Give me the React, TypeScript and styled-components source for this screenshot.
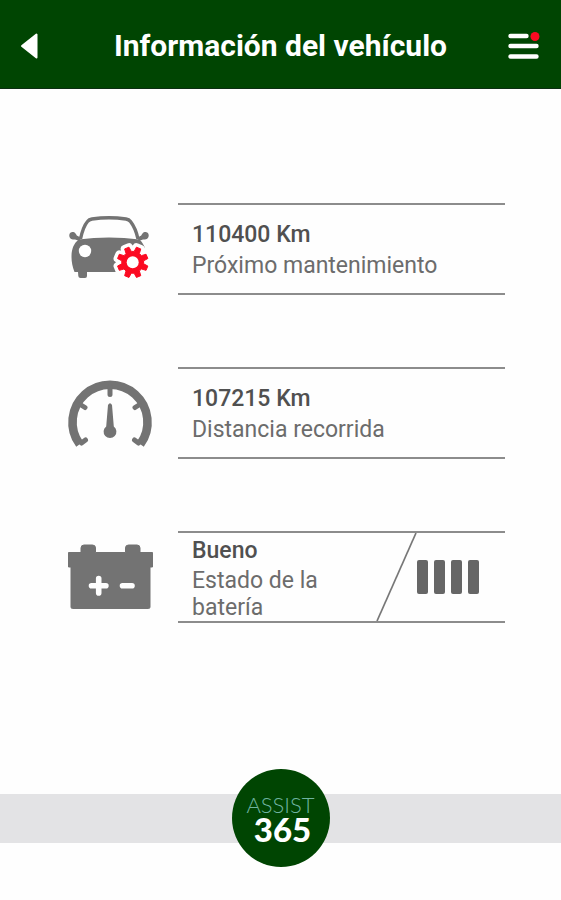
import React from "react";
import styled, { createGlobalStyle } from "styled-components";

const green = "#004502";
const gray = "#737373";
const red = "#fb0a22";

const GlobalStyle = createGlobalStyle`
  *, *::before, *::after { box-sizing: border-box; }
  body {
    margin: 0;
    background: #fefefe;
    font-family: Roboto, "Liberation Sans", sans-serif;
  }
`;

const Screen = styled.div`
  display: flex;
  flex-direction: column;
  min-height: 100vh;
`;

const Header = styled.header`
  display: flex;
  align-items: center;
  justify-content: space-between;
  height: 89px;
  padding: 3px 16px 0;
  background: ${green};
  border-bottom: 1px solid #0b2e12;
`;

const IconButton = styled.button`
  display: flex;
  align-items: center;
  justify-content: flex-end;
  width: 40px;
  height: 44px;
  padding: 0 3px 0 0;
  border: 0;
  background: none;
  cursor: pointer;
`;

const BackButton = styled(IconButton)`
  justify-content: flex-start;
`;

const Title = styled.h1`
  margin: 0;
  color: #fff;
  font-size: 30px;
  line-height: 36px;
  font-weight: 700;
  text-align: center;
`;

const Rows = styled.main`
  display: flex;
  flex: 1;
  flex-direction: column;
  gap: 72px;
  padding: 114px 56px 72px 66px;
`;

const Row = styled.section`
  display: flex;
  gap: 24px;
`;

const RowIcon = styled.svg`
  flex: none;
  width: 88px;
  height: 92px;
`;

const Panel = styled.div`
  display: flex;
  flex: 1;
  min-width: 0;
  min-height: 92px;
  border-top: 2px solid #8c8c8c;
  border-bottom: 2px solid #8c8c8c;
`;

const Copy = styled.div`
  display: flex;
  flex: 1;
  flex-direction: column;
  justify-content: center;
  gap: 2px;
  padding: 4px 0 0 14px;
`;

const Value = styled.p`
  margin: 0;
  color: #505050;
  font-size: 23px;
  line-height: 28px;
  font-weight: 500;
`;

const Label = styled.p<{ $narrow?: boolean }>`
  margin: 0;
  max-width: ${(p) => (p.$narrow ? "140px" : "none")};
  color: #6c6c6c;
  font-size: 23px;
  line-height: ${(p) => (p.$narrow ? "27px" : "30px")};
`;

const Slash = styled.svg`
  flex: none;
  width: 41px;
  height: 88px;
`;

const Level = styled.div`
  display: flex;
  align-items: center;
  gap: 6px;
  padding-right: 26px;
`;

const LevelBar = styled.span`
  width: 11px;
  height: 34px;
  border-radius: 2px;
  background: #666;
`;

const Footer = styled.footer`
  display: flex;
  align-items: center;
  justify-content: center;
  padding-bottom: 33px;
  background: linear-gradient(#e3e3e5, #e3e3e5) 0 25px / 100% 49px no-repeat;
`;

const AssistButton = styled.button`
  display: flex;
  flex-direction: column;
  align-items: center;
  justify-content: center;
  width: 98px;
  height: 98px;
  padding: 0;
  border: 0;
  border-radius: 50%;
  background: ${green};
  font-family: Lato, "Liberation Sans", sans-serif;
  cursor: pointer;
`;

const BrandName = styled.span`
  color: #6fb3a0;
  font-size: 22px;
  line-height: 22px;
  font-weight: 300;
`;

const BrandNumber = styled.span`
  padding-left: 4px;
  color: #fff;
  font-size: 33px;
  line-height: 26px;
  font-weight: 900;
`;

function gearPath(cx: number, cy: number, outer: number, inner: number, teeth: number) {
  const step = (Math.PI * 2) / teeth;
  const points: string[] = [];
  for (let i = 0; i < teeth; i++) {
    const mid = step * (i + 0.5);
    const corners: [number, number][] = [
      [inner, -0.33],
      [outer, -0.19],
      [outer, 0.19],
      [inner, 0.33],
    ];
    for (const [r, k] of corners) {
      const a = mid + step * k;
      points.push(`${(cx + r * Math.cos(a)).toFixed(2)} ${(cy + r * Math.sin(a)).toFixed(2)}`);
    }
  }
  return `M${points.join("L")}Z`;
}

const gear = gearPath(66.7, 59.3, 15.6, 11, 8);

function CarIcon() {
  return (
    <RowIcon viewBox="0 0 88 92" aria-hidden="true">
      <path
        d="M14.5 36C16 29 18.500 22 21.500 18.500Q23 16.500 26 16Q43 13.500 60 16Q63 16.500 64.500 18.500C68 23 70.500 29 72 36"
        fill="none"
        stroke={gray}
        strokeWidth="3.4"
      />
      <path
        d="M12.500 36.500Q43 32.500 73.500 36.500C79 42 80.500 48 80 55C80 61 79 65 77.500 69H21V73Q21 75 19 75H14.500Q12.500 75 12.300 73L12 69H8.500C6.500 64 5.500 59 5.500 54C5.500 46 7.500 41 12.500 36.500Z"
        fill={gray}
      />
      <path
        d="M14 38L9 36.500C6 37 3 35.500 3.300 32C3.500 29 7.500 28 9.500 30.500C10.500 32 11 33.500 15 34Z M72.500 38L77 36.500C80 37 83 35.500 82.700 32C82.500 29 78.500 28 76.500 30.500C75.500 32 75 33.500 71.500 34Z"
        fill={gray}
      />
      <circle cx="19" cy="48" r="6.2" fill="#fefefe" />
      <path d="M70 60L80 42L86 46V80H58Z" fill="#fefefe" />
      <path d={gear} fill="#fefefe" stroke="#fefefe" strokeWidth="8" strokeLinejoin="round" />
      <path d={gear} fill={red} stroke={red} strokeWidth="1" strokeLinejoin="round" />
      <circle cx="66.7" cy="59.3" r="6" fill="#fefefe" />
    </RowIcon>
  );
}

function GaugeIcon() {
  return (
    <RowIcon viewBox="0 0 88 92" aria-hidden="true">
      <path
        d="M13.700 77.300A37.500 37.500 0 1 1 74.300 77.300"
        fill="none"
        stroke={gray}
        strokeWidth="8.6"
      />
      <path
        d="M44 20V27.500M15 38L19 40.500M73 38L69 40.500M15.500 76L19.500 73M72.500 76L68.500 73"
        fill="none"
        stroke={gray}
        strokeWidth="5"
        strokeLinecap="round"
      />
      <path
        d="M42 38Q44 34.500 46 38L47.800 59.500A6.400 6.400 0 1 1 40.200 59.500Z"
        fill={gray}
      />
    </RowIcon>
  );
}

function BatteryIcon() {
  return (
    <RowIcon viewBox="0 0 88 92" aria-hidden="true">
      <path
        d="M2.500 21.500H15V17Q15 14 18 14H26.500Q29.500 14 29.500 17V21.500H59.500V17Q59.500 14 62.500 14H71Q74 14 74 17V21.500H86.500V36H84V76Q84 77.500 82.500 77.500H6.500Q5 77.500 5 76V36H2.500Z"
        fill={gray}
        stroke={gray}
        strokeWidth="1"
        strokeLinejoin="round"
      />
      <path
        d="M25.500 54.700H39.900M32.700 47.500V61.900M56.500 54.700H66"
        stroke="#fefefe"
        strokeWidth="5.6"
        strokeLinecap="round"
      />
    </RowIcon>
  );
}

export default function App() {
  return (
    <>
      <GlobalStyle />
      <Screen>
        <Header>
          <BackButton type="button" aria-label="Volver">
            <svg width="24" height="28" viewBox="0 0 24 28" aria-hidden="true">
              <path
                d="M20.500 2.500V25.500L6 14Z"
                fill="#fff"
                stroke="#fff"
                strokeWidth="2"
                strokeLinejoin="round"
              />
            </svg>
          </BackButton>
          <Title>Información del vehículo</Title>
          <IconButton type="button" aria-label="Menú">
            <svg width="36" height="32" viewBox="0 0 36 32" aria-hidden="true">
              <path
                d="M4.500 6H20.500M4.500 16H30.500M4.500 26.500H30.500"
                stroke="#fff"
                strokeWidth="4.4"
                strokeLinecap="round"
              />
              <circle cx="29" cy="6.500" r="4.500" fill={red} />
            </svg>
          </IconButton>
        </Header>
        <Rows>
          <Row>
            <CarIcon />
            <Panel>
              <Copy>
                <Value>110400 Km</Value>
                <Label>Próximo mantenimiento</Label>
              </Copy>
            </Panel>
          </Row>
          <Row>
            <GaugeIcon />
            <Panel>
              <Copy>
                <Value>107215 Km</Value>
                <Label>Distancia recorrida</Label>
              </Copy>
            </Panel>
          </Row>
          <Row>
            <BatteryIcon />
            <Panel>
              <Copy>
                <Value>Bueno</Value>
                <Label $narrow>Estado de la batería</Label>
              </Copy>
              <Slash viewBox="0 0 41 88" aria-hidden="true">
                <path d="M40 0L1 88" stroke="#777" strokeWidth="1.700" />
              </Slash>
              <Level role="img" aria-label="Nivel de batería: 4 de 4">
                <LevelBar />
                <LevelBar />
                <LevelBar />
                <LevelBar />
              </Level>
            </Panel>
          </Row>
        </Rows>
        <Footer>
          <AssistButton type="button">
            <BrandName>ASSIST</BrandName>
            <BrandNumber>365</BrandNumber>
          </AssistButton>
        </Footer>
      </Screen>
    </>
  );
}
